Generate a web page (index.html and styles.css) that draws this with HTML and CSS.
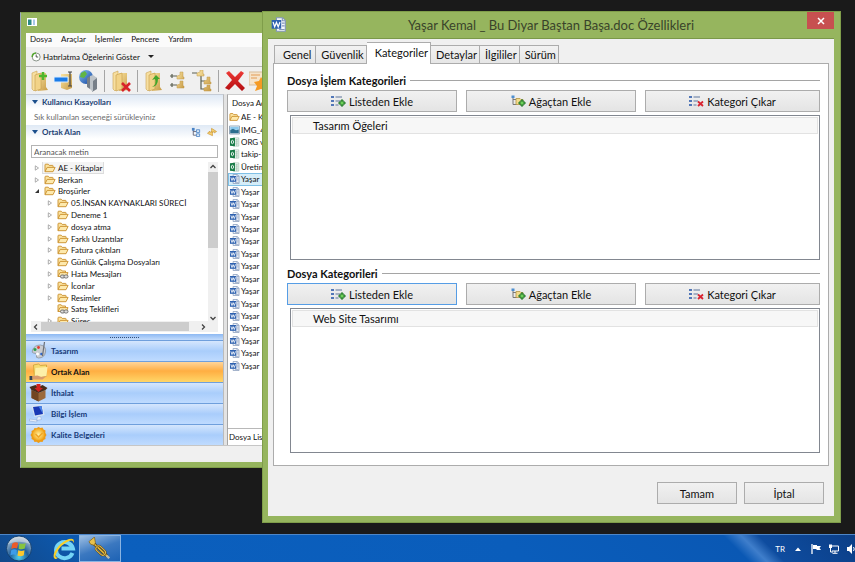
FILE: index.html
```html
<!DOCTYPE html>
<html lang="tr">
<head>
<meta charset="utf-8">
<title>Yaşar Kemal _ Bu Diyar Baştan Başa.doc Özellikleri</title>
<link rel="stylesheet" href="styles.css">
</head>
<body>
<svg class="defs" aria-hidden="true">
  <defs>
    <linearGradient id="g-fold" x1="0" y1="0" x2="1" y2="1"><stop offset="0" stop-color="#f9e3a0"/><stop offset="1" stop-color="#c79a45"/></linearGradient>
    <linearGradient id="g-blue" x1="0" y1="0" x2="1" y2="1"><stop offset="0" stop-color="#8cc4f5"/><stop offset="1" stop-color="#0d3f9c"/></linearGradient>
    <linearGradient id="g-red" x1="0" y1="0" x2="0" y2="1"><stop offset="0" stop-color="#ee3a36"/><stop offset="1" stop-color="#b30c10"/></linearGradient>
    <radialGradient id="g-orb" cx=".5" cy=".85" r=".8"><stop offset="0" stop-color="#4fd0ee"/><stop offset=".45" stop-color="#1f5f9c"/><stop offset="1" stop-color="#b6c6d4"/></radialGradient>
    <radialGradient id="g-sun"><stop offset="0" stop-color="#fff0a0"/><stop offset="1" stop-color="#f3a81c"/></radialGradient>
  </defs>
  <symbol id="folder" viewBox="0 0 12 10"><path d="M1 8.5V2q0-.8.8-.8h2.4l1 1.2h3.3q.6 0 .6.6v1.2" fill="#fbe3a0" stroke="#c98e2b" stroke-width=".9"/><path d="M1 8.7 3.2 4.4h7.9L9 8.7z" fill="#fde9ad" stroke="#c98e2b" stroke-width=".9" stroke-linejoin="round"/></symbol>
  <symbol id="folder-link" viewBox="0 0 12 10"><path d="M1 7.5V1.6q0-.8.8-.8h2.4l1 1.2h3.3v2" fill="#fbe3a0" stroke="#c98e2b" stroke-width=".9"/><path d="M1 7.5 3 3.6h8L9.4 7.5z" fill="#fde9ad" stroke="#c98e2b" stroke-width=".9"/><rect x="3.5" y="6" width="4" height="3" rx="1.4" fill="#ddd" stroke="#666" stroke-width=".9"/><rect x="7" y="6" width="4" height="3" rx="1.4" fill="#ddd" stroke="#666" stroke-width=".9"/></symbol>
  <symbol id="closed" viewBox="0 0 6 6"><path d="M1.3.8 4.5 3 1.3 5.2z" fill="#fff" stroke="#999" stroke-width=".8"/></symbol>
  <symbol id="opened" viewBox="0 0 6 6"><path d="M5 1v4H1z" fill="#333"/></symbol>
  <symbol id="word" viewBox="0 0 11 11"><path d="M4 .5h4.5l2 2v8H4z" fill="#f4f7fc" stroke="#8296b8" stroke-width=".8"/><path d="M8.3.7v2h2M8 4.5h2M8 6.5h2M6 9.2h4" stroke="#8296b8" stroke-width=".8" fill="none"/><path d="M.5 2.2h7v6.4h-7z" fill="#2f62b0"/><path d="M1.5 3.7 2.7 7.2 4 4l1.3 3.2 1.3-3.5" fill="none" stroke="#fff" stroke-width=".9"/></symbol>
  <symbol id="excel" viewBox="0 0 11 11"><path d="M4 1h6.2v9H4z" fill="#fff" stroke="#9fbfae" stroke-width=".8"/><path d="M5 3.2h4.5M5 5.4h4.5M5 7.6h4.5M8 2v8" stroke="#8fbaa2" stroke-width=".7"/><path d="M.5 1.5 6 .8v9.5L.5 9.6z" fill="#167a45"/><ellipse cx="3.2" cy="5.5" rx="1.2" ry="1.9" fill="none" stroke="#fff" stroke-width="1"/></symbol>
  <symbol id="image" viewBox="0 0 11 10"><path d="M.5 1h10v8H.5z" fill="#fff" stroke="#9ab"/><path d="M1.2 1.8h8.6v3H1.2z" fill="#8bc9ee"/><path d="M1.2 5 4 3.8l3 1.4 2.8-.6v3.6H1.2z" fill="#2c6e8e"/></symbol>
  <symbol id="list" viewBox="0 0 15 12"><path d="M0 1h3v2H0zM0 5h3v2H0zM0 9h3v2H0z" fill="#5277b8"/><path d="M4.500 2H11M4.500 6H9M4.500 10h3" stroke="#8d9db8" stroke-width="1.300"/></symbol>
  <symbol id="plus" viewBox="0 0 8 8"><path d="M3 1h2v2h2v2H5v2H3V5H1V3h2z" fill="#6fd05a" stroke="#23752a" stroke-width="1"/></symbol>
  <symbol id="list-add" viewBox="0 0 15 12"><use href="#list"/><use href="#plus" x="7" y="4" width="8" height="8"/></symbol>
  <symbol id="list-del" viewBox="0 0 15 12"><use href="#list"/><path d="m9 6.500 5 4.500m0-4.500L9 11" stroke="#d92330" stroke-width="1.800"/></symbol>
  <symbol id="tree-add" viewBox="0 0 15 12"><path d="M2 2v7.500h4M2 4.500h5" fill="none" stroke="#777" stroke-width="1"/><path d="M.5.500h3v2.500h-3z" fill="#4c8fd0"/><path d="M5 3.500h4l1 1h2v5H5z" fill="#f3dc8c" stroke="#b59642" stroke-width=".8"/><use href="#plus" x="7" y="4" width="8" height="8"/></symbol>
  <symbol id="bigfolder" viewBox="0 0 20 22"><path d="M2 3 7 1v17l-3 3-2-2z" fill="#f7dfa0" stroke="#c9a252" stroke-width=".6"/><path d="M7 3h9v14l2 3-10 1z" fill="url(#g-fold)"/><path d="M5 5 11 3v16l-6 2z" fill="#f2d388" stroke="#c59c4b" stroke-width=".6"/></symbol>
</svg>

<main class="desktop">
  <section class="window app" aria-label="Dosya">
    <header class="app-title"><svg class="app-icon" viewBox="0 0 10 8"><path d="M0 0h10v8H0z" fill="#fff"/><path d="M1 1.500h3.500V7H1z" fill="#2c8b86"/><path d="M6 1.500h2V7H6z" fill="#a9c7e8"/></svg></header>
    <nav class="menu"><a href="#">Dosya</a><a href="#">Araçlar</a><a href="#">İşlemler</a><a href="#">Pencere</a><a href="#">Yardım</a></nav>
    <div class="reminder"><button type="button"><svg class="clock" viewBox="0 0 10 10"><circle cx="5.200" cy="5" r="4" fill="#fff" stroke="#8a948a"/><path d="M1.200 5A4 4 0 0 1 5 1" fill="none" stroke="#55a630" stroke-width="1.500"/><path d="M5.200 2.500V5h2" fill="none" stroke="#444" stroke-width=".9"/></svg>Hatırlatma Öğelerini Göster<span class="caret"></span></button></div>
    <div class="tools">
      <button type="button" aria-label="Yeni klasör"><svg viewBox="0 0 20 22"><use href="#bigfolder"/><path d="M13 2v8M9 6h8" stroke="#4fb72c" stroke-width="2.600"/></svg></button>
      <button type="button" aria-label="Yeniden adlandır"><svg viewBox="0 0 20 22"><path d="M7 4h11v14l-5 2-6-2z" fill="url(#g-fold)"/><path d="M0 7h14v5H0z" fill="#1a7be8" stroke="#d9ecff"/><path d="M14 2h4M16 2v14M14 16h4" stroke="#444" stroke-width="1.200"/></svg></button>
      <button type="button" aria-label="Sunucu"><svg viewBox="0 0 20 22"><circle cx="8" cy="7" r="7" fill="url(#g-blue)"/><path d="m3 3 4-2 2 3-3 4-4-1z" fill="#61b545"/><path d="M9 8l3-2v13l-3-2zM14 6l5 2v11l-5 3z" fill="#777f88"/><path d="m12 6 3-1 4 3-4 3v11l-3-3z" fill="#bdc3c8"/></svg></button>
      <span class="sep"></span>
      <button type="button" aria-label="Klasörü sil"><svg viewBox="0 0 20 22"><use href="#bigfolder"/><path d="m11 13 8 8m0-8-8 8" stroke="#d8232a" stroke-width="2.600"/></svg></button>
      <span class="sep"></span>
      <button type="button" aria-label="Klasörü taşı"><svg viewBox="0 0 20 22"><use href="#bigfolder"/><path d="M8 17q5-3 3-8l-3 1 4-5 4 4-2 0q0 7-6 8z" fill="#43a62b"/></svg></button>
      <button type="button" aria-label="Daralt"><svg viewBox="0 0 20 22"><path d="M2 6h7M2 15h7M4 4v4M4 13v4" stroke="#5a5f50" stroke-width="1.200"/><path d="M9 8V6l3-1V2h3v5h1v2H9zM9 17v-2l3-1v-3h3v5h1v2H9z" fill="url(#g-fold)" stroke="#c39b49" stroke-width=".5"/></svg></button>
      <button type="button" aria-label="Genişlet"><svg viewBox="0 0 20 22"><path d="M0 3h5M9 5v14h4M9 11h4" fill="none" stroke="#5a5f50" stroke-width="1.200"/><path d="M5 5V3l3-1V0h3v4h1v2H5zM12 13v-2l3-1V7h3v5h1v2h-7zM12 20v-2l3-1v-2h3v4h1v2h-7z" fill="url(#g-fold)" stroke="#c39b49" stroke-width=".5"/></svg></button>
      <span class="sep"></span>
      <button type="button" aria-label="Sil"><svg viewBox="0 0 20 22"><path d="M1 3 4 1l6 6 6-6 3 2-6 8 7 7-3 3-7-7-6 6-4-2 7-8z" fill="url(#g-red)"/></svg></button>
      <button type="button" aria-label="Favori"><svg viewBox="0 0 20 22"><path d="M0 2h16v13H0z" fill="#f6e4cb" stroke="#d8bd9b"/><path d="M2 5h9M2 8h6" stroke="#e29b55"/><path d="m12 7 3 4 5 1-4 4 1 5-5-2-6 2 2-5-3-4 5-1z" fill="#f59a23"/></svg></button>
    </div>
    <div class="split">
      <aside class="side">
        <h2 class="bar"><span class="tri"></span>Kullanıcı Kısayolları</h2>
        <p class="hint">Sık kullanılan seçeneği sürükleyiniz</p>
        <h2 class="bar"><span class="tri"></span>Ortak Alan
          <span class="bar-icons"><svg viewBox="0 0 11 11"><path d="M2.500 3v6H6M2.500 5H6" fill="none" stroke="#667"/><path d="M1 1h3v3H1z" fill="#4a83c5"/><path d="M6 3h3.500v3H6zM6 7.500h3.500v3H6z" fill="#dceaf8" stroke="#4a83c5" stroke-width=".9"/></svg><svg viewBox="0 0 11 11"><path d="M5 4V1.500L10.500 5 8 6.500V5L5.500 6zM6 7v2.500L.5 7 3 4.500V6l2.500-1z" fill="#f7d174" stroke="#c8922c" stroke-width=".7"/></svg></span></h2>
        <div class="search"><input type="text" aria-label="Aranacak metin" placeholder="Aranacak metin"></div>
        <div class="tree-wrap">
          <ul class="tree">
            <li><svg class="tw"><use href="#closed"/></svg><span class="node picked"><svg class="fi"><use href="#folder"/></svg>AE - Kitaplar</span></li>
            <li><svg class="tw"><use href="#closed"/></svg><span class="node"><svg class="fi"><use href="#folder"/></svg>Berkan</span></li>
            <li><svg class="tw"><use href="#opened"/></svg><span class="node"><svg class="fi"><use href="#folder"/></svg>Broşürler</span></li>
            <li class="sub"><svg class="tw"><use href="#closed"/></svg><span class="node"><svg class="fi"><use href="#folder"/></svg>05.İNSAN KAYNAKLARI SÜRECİ</span></li>
            <li class="sub"><svg class="tw"><use href="#closed"/></svg><span class="node"><svg class="fi"><use href="#folder"/></svg>Deneme 1</span></li>
            <li class="sub"><svg class="tw"><use href="#closed"/></svg><span class="node"><svg class="fi"><use href="#folder"/></svg>dosya atma</span></li>
            <li class="sub"><svg class="tw"><use href="#closed"/></svg><span class="node"><svg class="fi"><use href="#folder"/></svg>Farklı Uzantılar</span></li>
            <li class="sub"><svg class="tw"><use href="#closed"/></svg><span class="node"><svg class="fi"><use href="#folder"/></svg>Fatura çıktıları</span></li>
            <li class="sub"><svg class="tw"><use href="#closed"/></svg><span class="node"><svg class="fi"><use href="#folder"/></svg>Günlük Çalışma Dosyaları</span></li>
            <li class="sub"><svg class="tw"><use href="#closed"/></svg><span class="node"><svg class="fi"><use href="#folder-link"/></svg>Hata Mesajları</span></li>
            <li class="sub"><svg class="tw"><use href="#closed"/></svg><span class="node"><svg class="fi"><use href="#folder"/></svg>İconlar</span></li>
            <li class="sub"><svg class="tw"><use href="#closed"/></svg><span class="node"><svg class="fi"><use href="#folder"/></svg>Resimler</span></li>
            <li class="sub"><svg class="tw"></svg><span class="node"><svg class="fi"><use href="#folder-link"/></svg>Satış Teklifleri</span></li>
            <li class="sub"><svg class="tw"><use href="#closed"/></svg><span class="node"><svg class="fi"><use href="#folder"/></svg>Süreç</span></li>
          </ul>
          <div class="vscroll"><svg viewBox="0 0 10 10"><path d="m2.500 6 2.500-2.500L7.500 6" fill="none" stroke="#444" stroke-width="1.300"/></svg><span class="vthumb"></span><svg viewBox="0 0 10 10"><path d="m2.500 4 2.500 2.500L7.500 4" fill="none" stroke="#444" stroke-width="1.300"/></svg></div>
        </div>
        <div class="hscroll"><svg viewBox="0 0 10 10"><path d="M6 2.500 3.500 5 6 7.500" fill="none" stroke="#444" stroke-width="1.300"/></svg><span class="hthumb"></span><svg viewBox="0 0 10 10"><path d="M4 2.500 6.500 5 4 7.500" fill="none" stroke="#444" stroke-width="1.300"/></svg></div>
        <div class="grip"><span></span></div>
        <nav class="stack">
          <button type="button"><svg viewBox="0 0 18 18"><path d="M3 8q2-5 8-5 6 1 5 7-1 6-7 6-3 0-2-3 0-2-3-2-2 0-1-3z" fill="#c9ccd0" stroke="#858b92" stroke-width=".7"/><circle cx="5.500" cy="7.500" r="1.500" fill="#2a9d4a"/><circle cx="9" cy="5.500" r="1.400" fill="#e03c31"/><circle cx="8" cy="12" r="1.500" fill="#fff"/><circle cx="12" cy="12" r="1.300" fill="#2d64c8"/><path d="M15 0 13 14" stroke="#6c7075" stroke-width="1.200"/></svg>Tasarım</button>
          <button type="button" class="on"><svg viewBox="0 0 18 18"><path d="m4 2 5-1 2 1.500 6-.5v11L5 14z" fill="#f6db70" stroke="#c59b2c" stroke-width=".7"/><path d="m6 5 12-1-1 9-12 2z" fill="#fdf0a8"/><path d="M0 13h3v4H0z" fill="#345"/><path d="m3 13 5-.5 4 1.500 5-1-4 3.500H3z" fill="#d89b6c"/></svg>Ortak Alan</button>
          <button type="button"><svg viewBox="0 0 18 18"><path d="m2 6 7 3 7-3v8l-7 3.500L2 14z" fill="#9b6a3d"/><path d="m2 6 7 3v8.500L2 14z" fill="#724522"/><path d="m2 6-2-3 6-2 3 2 4-2 5 3-2 2-7 3z" fill="#4a2e1a"/><path d="M7 0h4v4h2.500L9 8 5 4h2z" fill="#d3221f"/></svg>İthalat</button>
          <button type="button"><svg viewBox="0 0 18 18"><path d="m2 1 11-1 2 10-10 2z" fill="#d9e4f2"/><path d="m3.500 2 8.500-1 1.500 8-8 1.500z" fill="#1938b5"/><path d="m9 1.300 3-.3 1.500 8z" fill="#4b86ea"/><path d="m8 12 3-.5 1 3-5 1zM0 14l8 1-1 2-7-1z" fill="#e6eefa" stroke="#8fa9d5" stroke-width=".5"/></svg>Bilgi İşlem</button>
          <button type="button"><svg viewBox="0 0 18 18"><path d="m9 1 2 1 2-.5 1 2 2 1-.2 2.200L17 9l-1.200 2 .2 2-2 1-1 2-2-.2L9 17l-2-1.200-2 .2-1-2-2-1 .2-2L1 9l1.200-2L2 5l2-1 1-2 2 .2z" fill="#ee9c17"/><circle cx="9" cy="8.500" r="6" fill="url(#g-sun)"/><path d="m6 8 3 3 4-4" fill="none" stroke="#f0a426" stroke-width="1.300"/></svg>Kalite Belgeleri</button>
        </nav>
      </aside>
      <div class="files">
        <table>
          <thead><tr><th>Dosya Adı</th></tr></thead>
          <tbody>
            <tr><td><svg><use href="#folder"/></svg>AE - Ki</td></tr>
            <tr><td><svg><use href="#image"/></svg>IMG_42</td></tr>
            <tr><td><svg><use href="#excel"/></svg>ORG ve</td></tr>
            <tr><td><svg><use href="#excel"/></svg>takip-1</td></tr>
            <tr><td><svg><use href="#excel"/></svg>Üretim</td></tr>
            <tr class="sel"><td><svg><use href="#word"/></svg>Yaşar</td></tr>
            <tr><td><svg><use href="#word"/></svg>Yaşar</td></tr>
            <tr><td><svg><use href="#word"/></svg>Yaşar</td></tr>
            <tr><td><svg><use href="#word"/></svg>Yaşar</td></tr>
            <tr><td><svg><use href="#word"/></svg>Yaşar</td></tr>
            <tr><td><svg><use href="#word"/></svg>Yaşar</td></tr>
            <tr><td><svg><use href="#word"/></svg>Yaşar</td></tr>
            <tr><td><svg><use href="#word"/></svg>Yaşar</td></tr>
            <tr><td><svg><use href="#word"/></svg>Yaşar</td></tr>
            <tr><td><svg><use href="#word"/></svg>Yaşar</td></tr>
            <tr><td><svg><use href="#word"/></svg>Yaşar</td></tr>
            <tr><td><svg><use href="#word"/></svg>Yaşar</td></tr>
            <tr><td><svg><use href="#word"/></svg>Yaşar</td></tr>
            <tr><td><svg><use href="#word"/></svg>Yaşar</td></tr>
            <tr><td><svg><use href="#word"/></svg>Yaşar</td></tr>
            <tr><td><svg><use href="#word"/></svg>Yaşar</td></tr>
          </tbody>
        </table>
        <p class="files-foot">Dosya Listesi</p>
      </div>
    </div>
    <footer class="status"></footer>
  </section>

  <section class="window dialog" role="dialog" aria-labelledby="dlg-title">
    <header class="dlg-head">
      <svg class="dlg-icon"><use href="#word"/></svg>
      <h1 id="dlg-title">Yaşar Kemal _ Bu Diyar Baştan Başa.doc Özellikleri</h1>
      <button type="button" class="close" aria-label="Kapat"><svg viewBox="0 0 8 8"><path d="m1 1 6 6m0-6L1 7" stroke="#fff" stroke-width="1.500"/></svg></button>
    </header>
    <div class="dlg-body">
      <div class="tabs" role="tablist">
        <button type="button" role="tab">Genel</button><button type="button" role="tab">Güvenlik</button><button type="button" role="tab" class="active" aria-selected="true">Kategoriler</button><button type="button" role="tab">Detaylar</button><button type="button" role="tab">İlgililer</button><button type="button" role="tab">Sürüm</button>
      </div>
      <div class="pane">
        <section class="group">
          <h2>Dosya İşlem Kategorileri</h2>
          <div class="actions">
            <button type="button"><svg><use href="#list-add"/></svg>Listeden Ekle</button>
            <button type="button"><svg><use href="#tree-add"/></svg>Ağaçtan Ekle</button>
            <button type="button"><svg><use href="#list-del"/></svg>Kategori Çıkar</button>
          </div>
          <ul class="box"><li>Tasarım Öğeleri</li></ul>
        </section>
        <section class="group">
          <h2>Dosya Kategorileri</h2>
          <div class="actions">
            <button type="button" class="focus"><svg><use href="#list-add"/></svg>Listeden Ekle</button>
            <button type="button"><svg><use href="#tree-add"/></svg>Ağaçtan Ekle</button>
            <button type="button"><svg><use href="#list-del"/></svg>Kategori Çıkar</button>
          </div>
          <ul class="box"><li>Web Site Tasarımı</li></ul>
        </section>
      </div>
      <div class="dlg-foot"><button type="button">Tamam</button><button type="button">İptal</button></div>
    </div>
  </section>
</main>

<footer class="taskbar">
  <button type="button" class="start" aria-label="Başlat"><svg viewBox="0 0 28 28"><circle cx="14" cy="14" r="13" fill="url(#g-orb)" stroke="#123f70"/><path d="M7 9q3-2.500 6-.8L12 14q-3-1.500-6 .5z" fill="#ee5a27"/><path d="M14.500 8.500q3 1.500 6.500-.3L20 14q-3 1.500-6.500.3z" fill="#86c440"/><path d="M5.800 16q3-2 6-.5L11 21q-3-1.500-6 .3z" fill="#3d9ce8"/><path d="M13.200 15.800q3 1.500 6.500 0L19 21q-3 1.700-6.500.5z" fill="#fbc72e"/><path d="M3 9a12 12 0 0 1 22 0q-11-4-22 0z" fill="#fff" opacity=".35"/></svg></button>
  <button type="button" class="ie" aria-label="Internet Explorer"><svg viewBox="0 0 24 24"><path d="M20.500 16a8.500 8 0 1 1 .4-4.500H9.500" fill="none" stroke="#74d4f6" stroke-width="4"/><path d="M3 22C-2 19 7 5 17 2q6-1.500 4.500 4Q21 2.500 17 4 8 8 4.500 16 2 21 6 20.500 4.500 22.500 3 22z" fill="#f8cf28"/></svg></button>
  <button type="button" class="running" aria-label="Trompet"><svg viewBox="0 0 26 26"><path d="m4 5 17 16" stroke="#5b420f" stroke-width="3.200"/><path d="m4 5 17 16" stroke="#e2b93c" stroke-width="1.600"/><rect x="-5" y="-3" width="12" height="6" rx="3" transform="translate(13 14) rotate(43)" fill="none" stroke="#5b420f" stroke-width="2"/><rect x="-5" y="-3" width="12" height="6" rx="3" transform="translate(13 14) rotate(43)" fill="none" stroke="#e0bb50" stroke-width="1.100"/><path d="m1 5 6-5 1 6-1 3-4-1z" fill="#e7c24c" stroke="#74530f" stroke-width=".7"/><path d="m20 20 3 3" stroke="#bba" stroke-width="2.500"/></svg></button>
  <div class="tray"><span>TR</span>
    <svg viewBox="0 0 10 10"><path d="M5 3.500 8 7H2z" fill="#fff"/></svg>
    <svg viewBox="0 0 10 10"><path d="M1 0v10" stroke="#fff" stroke-width="1.300"/><path d="M2 1h4v1h4L8.500 4 10 6H5.500V5H2z" fill="#fff"/></svg>
    <svg viewBox="0 0 10 10"><path d="M3 2h6.500v5H3M6 7v2M3.500 9.300h5M1.500 4v4H4" fill="none" stroke="#fff"/><path d="M0 .5h3v3.500H0z" fill="#fff"/></svg>
    <svg viewBox="0 0 10 10"><path d="M0 3h2l3-3v10L2 7H0z" fill="#fff"/><path d="M6.500 3q1.500 2 0 4M8.500 1.500q2.500 3.500 0 7" fill="none" stroke="#fff"/></svg>
  </div>
</footer>
</body>
</html>
```
FILE: styles.css
```css
:root {
  --green: #96b55e;
  --face: #f0f0f0;
  --line: #acacac;
  --small: 8px;
  --text: 11px;
}
* { box-sizing: border-box; }
html, body { height: 100%; }
body {
  margin: 0;
  display: flex;
  flex-direction: column;
  overflow: hidden;
  background: #1a1a1a;
  color: #111;
  font-family: Lato, "Open Sans", "Noto Sans", sans-serif;
  font-size: var(--small);
}
button, input { font: inherit; color: inherit; margin: 0; }
button { padding: 0; border: 0; background: none; }
h1, h2, p, ul { margin: 0; padding: 0; }
ul { list-style: none; }
a { color: inherit; text-decoration: none; }
svg { display: block; flex: none; }
.defs { position: absolute; width: 0; height: 0; }

.desktop { position: relative; flex: 1; min-height: 0; }
.window { position: absolute; display: flex; flex-direction: column; background: var(--green); }

/* File manager window */
.app { left: 20px; top: 12px; right: 200px; bottom: 66px; padding: 0 5px 5px; border: 1px solid #7f9d4a; border-left-color: #9aa9c0; }
.app-title { height: 20px; padding: 5px 1px; }
.app-icon { width: 10px; height: 8px; }
.menu { display: flex; gap: 9px; height: 14px; padding: 0 4px; line-height: 13px; background: #fbfbfb; }
.reminder { height: 20px; padding: 0 5px; background: var(--face); border-bottom: 1px solid #b5b5b5; }
.reminder button { display: flex; align-items: center; height: 19px; gap: 2px; }
.clock { width: 10px; height: 10px; }
.caret { margin-left: 6px; border: 3px solid transparent; border-top-color: #222; border-bottom: 0; }
.tools { display: flex; align-items: center; gap: 4px; height: 27px; padding: 0 4px; background: var(--face); overflow: hidden; }
.tools svg { width: 20px; height: 22px; }
.sep { width: 1px; height: 22px; margin: 0 2px; background: #a5a5a5; }
.split { display: flex; flex: 1; min-height: 0; gap: 3px; background: #e3e3e3; }
.side { display: flex; flex-direction: column; width: 198px; border-top: 1px solid #c5ccd6; border-right: 1px solid #bbb; background: #fff; }
.bar { display: flex; align-items: center; gap: 4px; height: 14px; padding: 0 6px; font-size: var(--small); color: #1c3f72; background: linear-gradient(#dfe9f5, #fff); }
.tri { border: 3px solid transparent; border-top: 4px solid #1c4f8c; border-bottom: 0; }
.bar-icons { display: flex; gap: 6px; margin-left: auto; }
.bar-icons svg { width: 10px; height: 10px; }
.hint { height: 16px; padding: 0 8px; line-height: 16px; color: #6b6b6b; }
.search { padding: 6px 5px 4px; }
.search input { display: block; width: 100%; height: 13px; padding: 0 2px; border: 1px solid #b4b4b4; background: #fff; }
.search input::placeholder { color: #555; opacity: 1; }
.tree-wrap { display: flex; flex: 1; min-height: 0; margin: 0 5px; }
.tree { flex: 1; display: grid; grid-auto-rows: 1fr; height: 165px; clip-path: inset(0 0 5px 0); }
.tree li { display: flex; align-items: center; gap: 3px; min-height: 0; padding-left: 3px; white-space: nowrap; }
.tree .sub { padding-left: 16px; }
.tw { width: 6px; height: 6px; }
.fi { width: 12px; height: 10px; }
.node { display: flex; align-items: center; gap: 2px; height: 11px; padding: 0 1px; }
.picked { background: #f4f4f4; outline: 1px solid #dcdcdc; }
.vscroll { display: flex; flex-direction: column; width: 10px; height: 161px; background: #f0f0f0; }
.vscroll svg, .hscroll svg { width: 10px; height: 10px; }
.vthumb { height: 76px; margin-bottom: auto; background: #cdcdcd; }
.hscroll { display: flex; align-items: center; height: 11px; margin: 0 5px 2px; padding-right: 10px; background: #f0f0f0; }
.hthumb { flex: 1; height: 9px; margin-right: 9px; background: #cdcdcd; }
.grip { display: flex; justify-content: center; align-items: center; height: 6px; background: linear-gradient(#8db9f3, #c4dcfc); }
.grip span { width: 29px; border-top: 1px dotted #33507c; }
.stack { display: grid; grid-auto-rows: 21px; }
.stack button { display: flex; align-items: center; gap: 3px; padding: 0 3px; border-top: 1px solid #6f9fdc; font-weight: bold; color: #173a78; background: linear-gradient(#d5e6fd, #a9cdfb 50%, #bfdbff); }
.stack svg { width: 19px; height: 18px; }
.stack .on { color: #111; background: linear-gradient(#ffd59a, #ffae42 45%, #ffd668); }
.files { flex: 1; display: flex; flex-direction: column; background: #fff; border-left: 1px solid #a5a5a5; border-top: 1px solid #ccc; }
.files table { width: 100%; border-collapse: collapse; }
.files thead tr { height: 16px; }
.files tbody { display: grid; grid-auto-rows: 1fr; height: 261px; }
.files tr { min-height: 0; }
.files th { padding: 0 4px; font-weight: normal; text-align: left; }
.files td { display: flex; align-items: center; gap: 1px; height: 100%; padding: 0 1px; }
.files svg { width: 11px; height: 10px; }
.files .sel { background: #d5edf9; box-shadow: inset 0 0 0 1px #7fc0e6; }
.files-foot { height: 17px; margin-top: auto; padding: 0 1px; line-height: 16px; border-top: 1px solid #b8b8b8; }
.status { height: 17px; background: var(--face); border-top: 1px solid #c6c6c6; }

/* Properties dialog */
.dialog { left: 262px; right: 14px; top: 11px; bottom: 11px; padding: 0 6px 6px 5px; border: 1px solid #7f9d4a; font-size: var(--text); }
.dlg-head { position: relative; display: flex; align-items: center; justify-content: center; height: 26px; padding: 0 6px; }
.dlg-icon { position: absolute; left: 3px; top: 5px; width: 15px; height: 15px; }
.dlg-head h1 { font-size: 13px; font-weight: normal; color: #39432a; white-space: nowrap; }
.close { position: absolute; right: 0; top: 0; display: grid; place-items: center; width: 27px; height: 17px; background: #c75050; }
.close svg { width: 8px; height: 8px; }
.dlg-body { flex: 1; min-height: 0; display: flex; flex-direction: column; padding: 2px 5px 12px; background: var(--face); border-top: 1px solid #7a9848; }
.tabs { display: flex; align-items: flex-end; height: 22px; padding-left: 1px; }
.tabs button { height: 18px; padding: 0 2px 0 5px; border: 1px solid var(--line); border-bottom: 0; border-left-width: 0; background: linear-gradient(#f2f2f2, #e6e6e6); }
.tabs button:first-child { padding: 0 4px 0 8px; border-left-width: 1px; }
.tabs .active { position: relative; height: 22px; margin-bottom: -1px; padding: 0 2px 2px 8px; background: #fff; }
.pane { flex: 1; min-height: 0; display: flex; flex-direction: column; gap: 5px; padding: 8px 8px 12px 13px; background: #fff; border: 1px solid var(--line); }
.group { flex: 1; display: flex; flex-direction: column; }
.group h2 { display: flex; align-items: center; gap: 4px; height: 16px; font-size: var(--text); color: #111; }
.group h2::after { content: ""; flex: 1; border-top: 1px solid #a5a5a5; }
.actions { display: grid; grid-template-columns: 170fr 170fr 175fr; gap: 9px; margin: 2px 0 3px; }
.actions button, .dlg-foot button { display: flex; align-items: center; justify-content: center; gap: 3px; height: 22px; border: 1px solid var(--line); background: linear-gradient(#f1f1f1, #e4e4e4); }
.actions .focus { border-color: #569de5; }
.actions svg { width: 15px; height: 12px; }
.box { flex: 1; margin-left: 3px; padding: 1px; border: 1px solid #828790; }
.box li { height: 17px; padding-left: 20px; line-height: 15px; border: 1px solid #e2e2e2; background: #f7f7f7; }
.dlg-foot { display: flex; justify-content: flex-end; gap: 7px; padding: 16px 5px 0; }
.dlg-foot button { width: 80px; }

/* Taskbar */
.taskbar { display: flex; align-items: center; height: 28px; padding-left: 5px; border-top: 1px solid #4d86c8; background: linear-gradient(45deg, #12498a, #0b5fbd 15%, #0a5dbb 60%, #0a58b4 85%, #3f7ecb 87%, #0e4c9f 89%, #0b3e86); }
.start svg { width: 28px; height: 27px; }
.ie { margin-left: 19px; }
.ie svg { width: 24px; height: 24px; }
.running { display: grid; place-items: center; width: 42px; height: 27px; margin-left: 3px; border: 1px solid #8ab4e2; background: linear-gradient(160deg, #9dbfe4, #3b78c0 50%, #1d62b4); }
.running svg { width: 24px; height: 24px; }
.tray { display: flex; align-items: center; gap: 8px; margin-left: auto; margin-right: -2px; color: #fff; }
.tray svg { width: 10px; height: 10px; }
```
